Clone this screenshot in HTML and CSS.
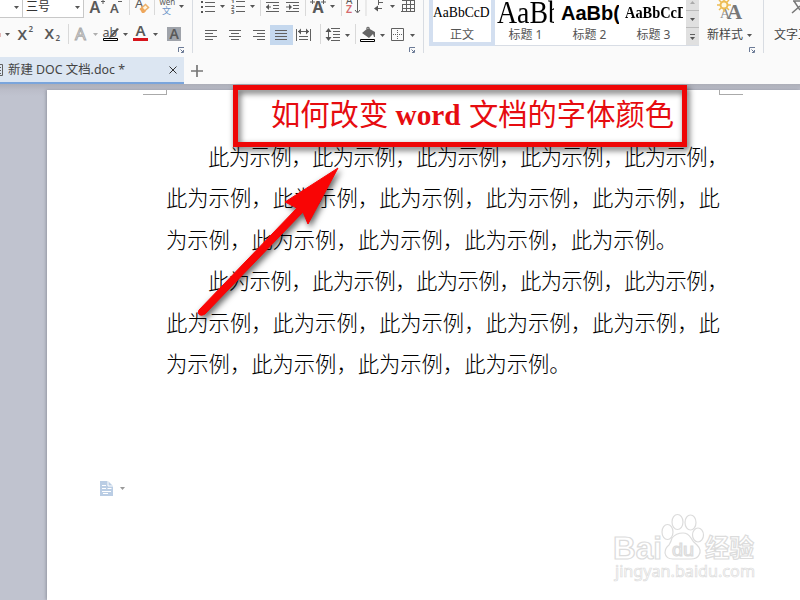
FILE: index.html
```html
<!DOCTYPE html>
<html lang="zh-CN">
<head>
<meta charset="utf-8">
<title>新建 DOC 文档.doc</title>
<link rel="stylesheet" href="styles.css">
</head>
<body>
<svg class="defs" width="0" height="0"><defs>
<path id="caret" d="M0 0h5L2.5 3z" fill="#555"/>
<path id="launch" d="M.5 5V.5H6M5.5 3v2.500H3M2.500 2.500l2.500 2.500" fill="none" stroke="#6b7a96"/>
</defs></svg>
<header class="ribbon">
<section class="group font-group">
<div class="row top">
<div class="combo size-prev"><svg width="22" height="17" viewBox="0 0 22 17"><use href="#caret" x="14" y="6"/></svg></div>
<div class="combo size"><span>三号</span><svg width="12" height="17" viewBox="71 0 12 17"><use href="#caret" x="75" y="6"/></svg></div>
<svg width="46" height="18" viewBox="84 0 46 18"><g class="ic"><text x="89.500" y="13" font-size="16" class="semi">A</text><text x="110" y="12.500" font-size="13" class="semi">A</text><path d="M101 1.500h4M103 0v4M118 1.500h4" class="ln"/></g><path d="M129.500 0v15" class="sep"/></svg>
<svg width="25" height="18" viewBox="130 0 25 18"><text x="135" y="8" font-size="13" class="ic">A</text><path d="M140.500 9l5-4.500 3 3-5 4.500z" fill="#fff4df" stroke="#edb06a" stroke-width="1.500"/><path d="M140 9l2-2 4 4-2 2h-2z" fill="#eea75d"/><path d="M154.500 0v15" class="sep"/></svg>
<svg width="37" height="18" viewBox="155 0 37 18"><text x="159.500" y="4.500" font-size="8" class="ic">wén</text><text x="162" y="13.500" font-size="9" class="cjk" fill="#6d93c8">文</text><use href="#caret" x="179" y="5"/></svg>
</div>
<div class="row bottom">
<svg width="14" height="30" viewBox="0 18 14 30"><path d="M0 33v4" stroke="#c77"/><use href="#caret" x="5" y="33"/></svg>
<svg width="55" height="30" viewBox="14 18 55 30"><g class="ic semi"><text x="17.500" y="40" font-size="15">X</text><text x="28.500" y="31.500" font-size="8">2</text><text x="44.500" y="39" font-size="15">X</text><text x="55.500" y="41" font-size="8">2</text></g><path d="M68.500 24v20" class="sep"/></svg>
<svg width="31" height="30" viewBox="69 18 31 30"><text x="75" y="40" font-size="17" class="hollow">A</text><use href="#caret" x="93" y="33" opacity=".45"/></svg>
<svg width="30" height="30" viewBox="100 18 30 30"><text x="102.500" y="36.500" font-size="12.500" class="ic">ab</text><path d="M110 36l7-8 2 1-7 8-3 1z" fill="#555"/><path d="M103.500 38.500h14v2h-14z" fill="#fff" stroke="#000"/><use href="#caret" x="123" y="33"/></svg>
<svg width="31" height="30" viewBox="130 18 31 30"><text x="135.500" y="36" font-size="15" class="ic semi">A</text><path d="M133 38h15v3h-15z" fill="#d7141b"/><use href="#caret" x="153" y="33"/></svg>
<svg width="31" height="30" viewBox="161 18 31 30"><path d="M167 27h14v14h-14z" fill="#9fa3aa"/><text x="169.500" y="39" font-size="14" class="ic semi">A</text></svg>
</div>
<div class="foot"><svg width="6" height="6" viewBox="0 0 6 6"><use href="#launch"/></svg></div>
</section>
<section class="group para-group">
<div class="row top">
<svg width="34" height="18" viewBox="193 0 34 18"><path d="M201 1h2v2h-2zM201 6h2v2h-2zM201 11h2v2h-2z" fill="#555"/><path d="M205 2.500h10M205 6.500h10M205 11.500h10" class="ln"/><use href="#caret" x="220" y="5"/></svg>
<svg width="34" height="18" viewBox="227 0 34 18"><g class="ic b" font-size="6"><text x="231" y="3">1</text><text x="231" y="8.500">2</text><text x="231" y="14">3</text></g><path d="M236 1.500h9M236 6.500h9M236 11.500h9" class="ln"/><use href="#caret" x="250" y="5"/><path d="M260.500 0v16" class="sep"/></svg>
<svg width="45" height="18" viewBox="261 0 45 18"><path d="M266 2.500h13M273 5.500h6M273 8.500h6M266 11.500h13M286 2.500h13M293 5.500h6M293 8.500h6M286 11.500h13M266 7h5M286 7h5" class="ln"/><path d="M266 7l3-3v6zM292 7l-3-3v6z" fill="#555"/><path d="M305.500 0v16" class="sep"/></svg>
<svg width="36" height="18" viewBox="306 0 36 18"><text x="312.500" y="13" font-size="16" class="ic b">A</text><path d="M310 2h5M321 2h5M312.500 0v4M323.500 0v4" class="ln"/><use href="#caret" x="330" y="5"/><path d="M341.500 0v16" class="sep"/></svg>
<svg width="25" height="18" viewBox="342 0 25 18"><text x="346" y="4" font-size="10" class="ic">A</text><text x="346" y="13" font-size="10.500" fill="#d56a6e" class="semi">Z</text><path d="M357.500 0v12M355 10l2.500 3 2.500-3" class="ln"/><path d="M366 0v16" class="sep"/></svg>
<svg width="57" height="18" viewBox="367 0 57 18"><path d="M375 8.500h7M379 2.500h4M378.500 0v5" class="ln"/><path d="M374 8.500l4-3v6z" fill="#555"/><use href="#caret" x="390" y="5"/><path d="M402 .5h13M402 4.500h13M402 8.500h13M401 11.500h14M402.500 4v8M406.500 0v12M410.500 0v12M414.500 0v12" class="ln"/></svg>
</div>
<div class="row bottom">
<svg width="77" height="30" viewBox="193 18 77 30"><path d="M205 30.500h12M205 33.500h8M205 36.500h12M205 39.500h8M229 30.500h12M231 33.500h8M229 36.500h12M231 39.500h8M253 30.500h12M257 33.500h8M253 36.500h12M257 39.500h8" class="ln"/></svg>
<svg class="active" width="23" height="20" viewBox="270 25 23 20"><path d="M275 30.500h12M275 33.500h12M275 36.500h12M275 39.500h12" class="ln"/></svg>
<svg width="28" height="30" viewBox="293 18 28 30"><path d="M296.500 29v12M310.500 29v12M298 31.500h11M299 36.500h9M299 39.500h9" class="ln"/><path d="M298 31.500l3-3v6zM309 31.500l-3-3v6z" fill="#555"/><path d="M320.500 24v20" class="sep"/></svg>
<svg width="35" height="30" viewBox="321 18 35 30"><path d="M331 28.500h9M333 31.500h7M333 34.500h7M333 37.500h7M331 40.500h9M328.500 29v11" class="ln"/><path d="M325.500 32l3-4 3 4zM325.500 37l3 4 3-4z" fill="#555"/><use href="#caret" x="345" y="34"/><path d="M355.500 24v20" class="sep"/></svg>
<svg width="30" height="30" viewBox="356 18 30 30"><path d="M362 33l6-5 7 4v5h-1l-1-3-4 4z" fill="#666"/><path d="M366 28.500q2-3 4 0" class="ln"/><path d="M360.500 39.500h14v2h-14z" fill="#fff" stroke="#000"/><use href="#caret" x="380" y="34"/></svg>
<svg width="38" height="30" viewBox="386 18 38 30"><path d="M391.500 28.500h12v12h-12z" class="ln"/><path d="M397.500 30v10M393 34.500h10" class="ln" stroke-dasharray="1 1"/><use href="#caret" x="410" y="34"/></svg>
</div>
<div class="foot"><svg width="6" height="6" viewBox="0 0 6 6"><use href="#launch"/></svg></div>
</section>
<section class="group style-group">
<div class="gallery">
<div class="style selected"><div class="sample s0">AaBbCcD</div><div class="name">正文</div></div>
<div class="style"><div class="sample s1"><span>AaBb</span></div><div class="name">标题 1</div></div>
<div class="style"><div class="sample s2">AaBb(</div><div class="name">标题 2</div></div>
<div class="style"><div class="sample s3"><span>AaBbCcD</span></div><div class="name">标题 3</div></div>
<svg class="scroller" width="13" height="45" viewBox="0 0 13 45"><path d="M4 4h5L6.500 1z" fill="#aaa"/><path d="M0 10.500h13M0 27.500h13" stroke="#bbb"/><use href="#caret" x="4" y="18"/><path d="M4 34.500h5" class="ln"/><use href="#caret" x="4" y="37"/></svg>
</div>
<div class="new-style">
<svg width="44" height="24" viewBox="707 0 44 24"><text x="720" y="18" font-size="14" class="serif" fill="#888">A</text><text x="727" y="19" font-size="21" class="serif b" fill="#777">A</text><circle cx="724" cy="5" r="3.500" fill="#fff8df" stroke="#edbc54" stroke-width="2"/><path d="M724-2v3M724 9v3M717 5h3M728 5h3M719 0l2 2M719 10l2-2M729 0l-2 2M729 10l-2-2" stroke="#edbc54" stroke-width="1.500"/></svg>
<div class="label">新样式<svg width="5" height="3" viewBox="0 0 5 3"><use href="#caret"/></svg></div>
</div>
<div class="foot"><svg width="6" height="6" viewBox="0 0 6 6"><use href="#launch"/></svg></div>
</section>
<section class="tools"><svg width="36" height="24" viewBox="764 0 36 24"><path d="M793 1h7M794 1l6 9M800 6l-8 7" fill="none" stroke="#777" stroke-width="1.500"/></svg><div class="label">文字工具</div></section>
</header>
<nav class="tabs">
<div class="tab"><svg width="4" height="12" viewBox="0 0 4 12"><path d="M0 .5h2.500v11H0M0 3.500h1M0 6.500h1M0 9.500h1" class="ln"/></svg><span class="title">新建 DOC 文档.doc *</span><svg class="close" width="8" height="8" viewBox="0 0 8 8"><path d="M.5.5l7 7M7.500.5l-7 7" stroke="#333" fill="none"/></svg></div>
<svg class="plus" width="12" height="12" viewBox="0 0 12 12"><path d="M0 6h12M6 0v12" stroke="#777" stroke-width="1.700"/></svg>
</nav>
<main class="workspace">
<article class="page">
<div class="margins"><i class="corner left"></i><i class="corner right"></i></div>
<h1>如何改变 <b>word</b> 文档的字体颜色</h1>
<p><span class="line first">此为示例，此为示例，此为示例，此为示例，此为示例，</span><span class="line">此为示例，此为示例，此为示例，此为示例，此为示例，此</span><span class="line">为示例，此为示例，此为示例，此为示例，此为示例。</span></p>
<p><span class="line first">此为示例，此为示例，此为示例，此为示例，此为示例，</span><span class="line">此为示例，此为示例，此为示例，此为示例，此为示例，此</span><span class="line">为示例，此为示例，此为示例，此为示例。</span></p>
<svg class="paste" width="28" height="15" viewBox="0 0 28 15"><path d="M0 0h8l5 5v10H0z" fill="#bacde4"/><path d="M8 0v5h5M2 4.500h4M2 7.500h4M2 10.500h9M3 12.500h5M7.500 7.500h4" fill="none" stroke="#fff"/><path d="M20 6h5l-2.500 3z" fill="#999"/></svg>
</article>
</main>
<svg class="annotation" width="800" height="600" viewBox="0 0 800 600">
<g class="shadow"><rect x="235.500" y="87.500" width="449" height="57" fill="none" stroke="#ee0606" stroke-width="5"/><path d="M199 310L297 208L285 202L338 168L308 224L303 212L205 314Q200 317 198 313Z" fill="#f90505" stroke="#f90505" stroke-linejoin="round"/></g>
</svg>
<svg class="watermark" width="150" height="75" viewBox="610 510 150 75">
<g fill="#fff" stroke="#dcdcdc" stroke-width="1.200"><ellipse cx="667.500" cy="532" rx="5.500" ry="7.500"/><ellipse cx="677.500" cy="522" rx="5.500" ry="7.500"/><ellipse cx="690.500" cy="522.500" rx="5.500" ry="7.500"/><ellipse cx="698" cy="535" rx="5.500" ry="7"/><path d="M672 538q4-5 11-5 5 0 8 5 2 4 6 7 5 5 2 10-2 4-8 4h-18q-7 0-8-6 0-5 4-8 2-3 3-7z"/>
<text x="613" y="559" font-size="31" textLength="49" lengthAdjust="spacingAndGlyphs" class="latin b">Bai</text><text x="672" y="556" font-size="18" textLength="22" lengthAdjust="spacingAndGlyphs" class="latin">du</text><text x="705" y="557" font-size="24.500" textLength="49" class="cjk b">经验</text><text x="615" y="577" font-size="16" textLength="140" lengthAdjust="spacingAndGlyphs" class="domain">jingyan.baidu.com</text></g>
</svg>
</body>
</html>
```
FILE: styles.css
```css
* { box-sizing: border-box; }
body { margin: 0; width: 800px; height: 600px; overflow: hidden; position: relative; background: #fafafa; font-family: "Noto Sans", "Noto Sans CJK SC", sans-serif; }
svg { display: block; flex: none; }
.defs { position: absolute; }
.ribbon { display: flex; height: 57px; }
.group { position: relative; flex: none; border-right: 1px solid #d8dce2; height: 53px; }
.font-group { width: 193px; }
.para-group { width: 231px; }
.style-group { width: 340px; display: flex; padding-left: 5px; }
.row { display: flex; }
.top { height: 18px; }
.bottom { height: 30px; align-items: flex-start; }
.foot { position: absolute; right: 8px; bottom: 0; }
.combo { height: 18px; border-right: 1px solid #c8c8c8; border-bottom: 1px solid #c8c8c8; background: #fff; display: flex; justify-content: space-between; }
.size-prev { width: 23px; }
.size { width: 61px; padding-left: 3px; font-size: 12px; line-height: 14px; color: #333; }
.ic { fill: #595959; }
.b { font-weight: 700; }
.semi { font-weight: 600; }
.ln { fill: none; stroke: #606060; stroke-width: 1; }
.sep { stroke: #d9d9d9; fill: none; }
.cjk { font-family: "Noto Sans CJK SC", sans-serif; }
.serif { font-family: "Liberation Serif", serif; }
.latin { font-family: "Liberation Sans", sans-serif; }
.hollow { fill: #fff; stroke: #aaa; }
.active { background: #c5d8ee; margin-top: 7px; }
.gallery { display: flex; height: 46px; width: 270px; background: #fff; border-bottom: 1px solid #d8dde5; }
.style { width: 64px; text-align: center; overflow: hidden; height: 46px; }
.selected { width: 66px; border: solid #d3dff0; border-width: 0 4px 4px; }
.sample { height: 26px; line-height: 25px; white-space: nowrap; color: #000; overflow: hidden; text-align: left; font-family: "Liberation Serif", serif; }
.sample span { display: inline-block; transform-origin: 0 50%; }
.s0 { font-size: 13.6px; }
.s1 { font-size: 32px; line-height: 24px; width: 57px; margin-left: 2px; }
.s1 span { transform: scaleX(.87); }
.s2 { font: bold 20px/26px "Liberation Sans", sans-serif; margin-left: 2px; width: 58px; }
.s3 { font-size: 16px; font-weight: 700; width: 58px; margin-left: 2px; }
.s3 span { transform: scaleX(.9); }
.name, .label { font: 12px/18px "Noto Sans", "Noto Sans CJK SC", sans-serif; color: #555; white-space: nowrap; }
.name { padding-right: 3px; }
.selected .name { padding: 0; }
.scroller { margin-left: -1px; background: #e0e0e0; }
.new-style { margin-left: 8px; }
.label { display: flex; align-items: center; gap: 4px; margin-top: 2px; color: #444; }
.tools { width: 36px; overflow: hidden; }
.tools .label { margin-left: 10px; }
.tabs { display: flex; height: 27px; align-items: center; }
.tab { width: 184px; height: 27px; background: #dce6f2; border-bottom: 2px solid #7aa5dc; display: flex; align-items: center; padding-right: 7px; }
.title { margin: 1px 0 0 4px; font-size: 12.4px; line-height: 18px; color: #444; flex: 1; white-space: nowrap; }
.close { margin-top: 1px; }
.plus { margin-left: 7px; }
.workspace { height: 516px; padding: 6px 0 0 47px; background: linear-gradient(#acaeb8, #bbbdc9 6px, #c0c3cf 12px); }
.page { height: 510px; background: #fff; box-shadow: -1px 0 3px #9295a0; padding: 0 0 0 119px; overflow: hidden; }
.margins { display: flex; justify-content: space-between; height: 5px; margin-left: -23px; padding-right: 57px; }
.corner { width: 24px; border: 0 solid #aaa; border-bottom-width: 1px; }
.left { border-right-width: 1px; }
.right { border-left-width: 1px; }
h1 { margin: 0 0 0 105px; height: 39.5px; font: 400 29.3px/41px "Liberation Serif", "Noto Sans CJK SC", serif; color: #e60c10; white-space: nowrap; }
h1 b { font-size: 29.3px; margin-right: 1px; }
p { margin: 0; font: 300 21.3px/41.6px "Noto Sans CJK SC", sans-serif; color: #000; }
.line { display: block; white-space: nowrap; height: 41.6px; }
.first { padding-left: 42px; letter-spacing: -.5px; }
.paste { margin: 96.5px 0 0 -66px; }
.annotation { position: absolute; left: 0; top: 0; }
.shadow { filter: drop-shadow(2px 3px 3px rgba(0,0,0,.65)); }
.watermark { position: absolute; left: 610px; top: 510px; }
.domain { stroke-width: .7px; }
```
